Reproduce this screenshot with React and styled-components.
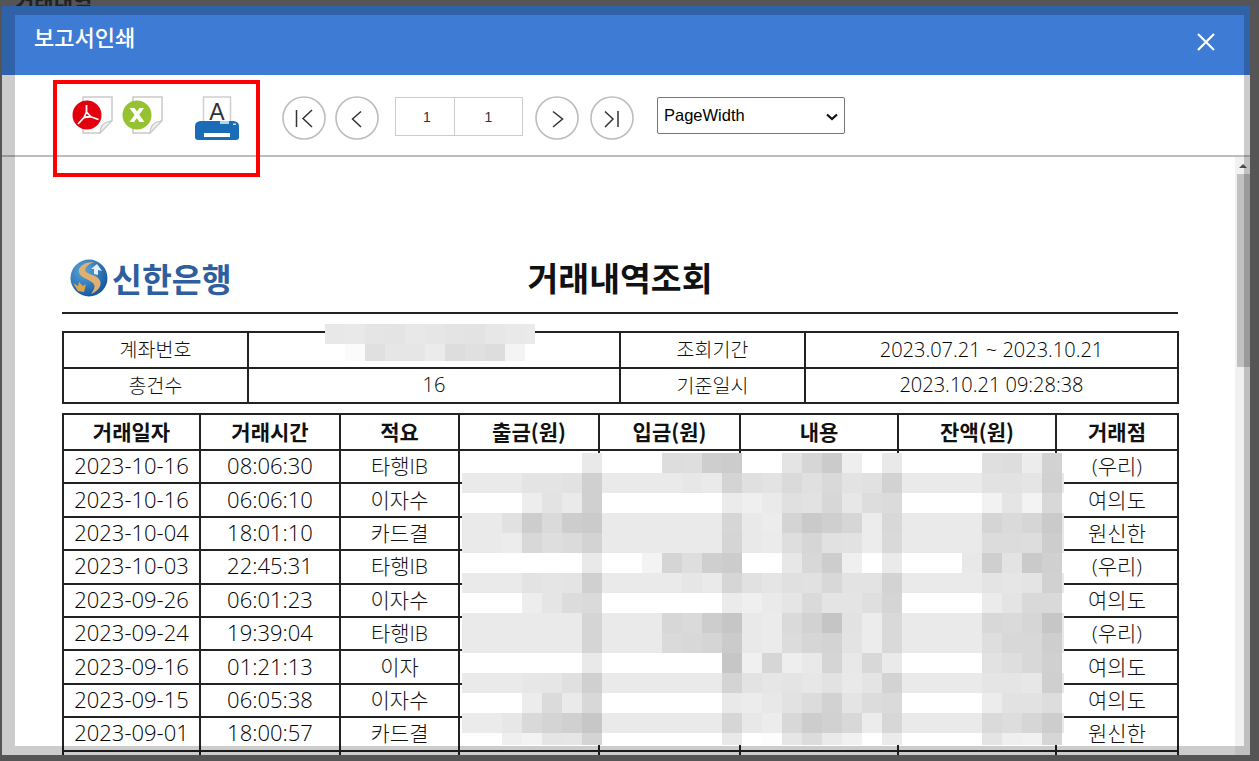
import React from "react";
import styled, { createGlobalStyle } from "styled-components";

const GlobalStyle = createGlobalStyle`
    html, body {
        margin: 0;
        height: 100%;
        overflow: hidden;
        background: #555;
    }
    * {
        box-sizing: border-box;
    }
`;

const KR = `"Open Sans", "Noto Sans CJK KR", sans-serif`;

const selectArrow = encodeURIComponent(
    `<svg xmlns="http://www.w3.org/2000/svg" width="12" height="8"><path d="M1 1.500L6 6L11 1.500" fill="none" stroke="#111" stroke-width="2.200"/></svg>`
);

const Backdrop = styled.div`
    position: relative;
    height: 100vh;
    padding: 6px 9px 6px 2px;
    background: #555;
    font-family: ${KR};
`;

const BehindTitle = styled.div`
    position: absolute;
    left: 15px;
    top: -13px;
    font-size: 21px;
    line-height: 28px;
    font-weight: 700;
    color: #222;
`;

const Modal = styled.div`
    position: relative;
    display: flex;
    flex-direction: column;
    height: 100%;
    background: #fff;
    overflow: hidden;
`;

/* translucent bootstrap-ish modal border, it sits on top of everything */
const ModalFrame = styled.div`
    position: absolute;
    inset: 0;
    border-style: solid;
    border-color: rgba(0, 0, 0, 0.2);
    border-width: 9px 6px 9px 13px;
    pointer-events: none;
`;

const Marker = styled.div`
    position: absolute;
    left: 51px;
    top: 74px;
    width: 207px;
    height: 97px;
    border: 4px solid #f00;
    pointer-events: none;
`;

const Header = styled.div`
    display: flex;
    justify-content: space-between;
    align-items: flex-start;
    flex: none;
    height: 69px;
    padding: 15px 35px 0 32px;
    background: #3d7bd4;
`;

const ModalTitle = styled.div`
    font-family: "Noto Sans CJK KR", sans-serif;
    font-size: 22px;
    line-height: 30px;
    font-weight: 500;
    color: #fff;
`;

const CloseIcon = styled.svg`
    display: block;
    width: 18px;
    height: 18px;
    margin-top: 12px;
`;

const Toolbar = styled.div`
    display: flex;
    align-items: flex-start;
    flex: none;
    height: 82px;
    padding: 21px 0 0 69px;
    border-bottom: 2px solid #bdbdbd;
    background: #fff;
`;

const ExportIcon = styled.svg`
    display: block;
    flex: none;
    margin-left: ${(p) => p.$gap || 0}px;
`;

const NavGroup = styled.div`
    display: flex;
    gap: ${(p) => p.$gap}px;
    margin-left: ${(p) => p.$left}px;
`;

const NavButton = styled.button`
    display: block;
    width: 44px;
    height: 44px;
    padding: 0;
    border: 0;
    background: none;
`;

const NavGlyph = styled.svg`
    display: block;
`;

const PageBox = styled.div`
    display: flex;
    width: 128px;
    height: 39px;
    margin: 1px 0 0 16px;
    border: 1px solid #ccc;
`;

const PageInput = styled.input`
    width: ${(p) => p.$w}px;
    height: 100%;
    padding: 0 0 0 ${(p) => p.$inset || 0}px;
    border: 0;
    border-right: ${(p) => (p.$divided ? "1px solid #ccc" : "0")};
    outline: 0;
    background: none;
    font-family: "Liberation Sans", sans-serif;
    font-size: 14px;
    color: #333;
    text-align: center;
`;

const ZoomSelect = styled.select`
    width: 188px;
    height: 37px;
    margin: 1px 0 0 23px;
    padding: 0 0 2px 6px;
    border: 1px solid #767676;
    border-radius: 2px;
    appearance: none;
    background: #fff url("data:image/svg+xml,${selectArrow}") no-repeat right 6px top 15px;
    font-family: "Liberation Sans", sans-serif;
    font-size: 16.5px;
    color: #000;
`;

const Pane = styled.div`
    position: relative;
    flex: 1;
    min-height: 0;
    overflow: hidden;
`;

const ScrollTrack = styled.div`
    position: absolute;
    top: 0;
    right: 0;
    bottom: 0;
    width: 15px;
    padding-left: 2px;
    background: #f1f1f1;
`;

const ScrollArrow = styled.div`
    width: 0;
    height: 0;
    margin: 7px 0 0 2px;
    border-left: 4px solid transparent;
    border-right: 4px solid transparent;
    border-bottom: 4px solid #505050;
`;

const ScrollThumb = styled.div`
    height: 193px;
    margin-top: 6px;
    background: #c1c1c1;
`;

const Sheet = styled.div`
    width: 1116px;
    margin-left: 60px;
    padding-top: 98px;
`;

const TitleRow = styled.div`
    display: grid;
    grid-template-columns: 1fr auto 1fr;
    align-items: flex-start;
    height: 60px;
    margin-top: -1px;
    border-bottom: 2px solid #222;
`;

const Logo = styled.div`
    display: flex;
    align-items: center;
    gap: 4px;
    padding: 1px 0 0 8px;
    font-family: "Noto Sans CJK KR", sans-serif;
    font-size: 32.500px;
    line-height: 46px;
    font-weight: 700;
    color: #2f5e9e;
`;

const LogoMark = styled.svg`
    display: block;
    flex: none;
`;

const ReportTitle = styled.h1`
    margin: 0;
    font-family: "Noto Sans CJK KR", sans-serif;
    font-size: 33.5px;
    line-height: 46px;
    font-weight: 700;
    color: #111;
`;

const TableWrap = styled.div`
    position: relative;
    margin-top: ${(p) => p.$top}px;
`;

const Grid = styled.table`
    width: 1115px;
    table-layout: fixed;
    border-collapse: collapse;
    color: #111;
    font-size: ${(p) => p.$size}px;
    font-weight: 300;

    th,
    td {
        padding: 0;
        border: 2px solid #222;
        text-align: center;
        white-space: nowrap;
        overflow: hidden;
        line-height: 1;
    }

    th {
        padding-bottom: 2px;
        font-weight: 700;
        color: #111;
        font-family: "Noto Sans CJK KR", sans-serif;
    }
`;

const NumCell = styled.td`
    && {
        padding-bottom: ${(p) => p.$lift || 0}px;
    }
    font-size: ${(p) => p.$size}px;
    color: #000;
`;

const InfoRow = styled.tr`
    height: 35.5px;
`;

const HeadRow = styled.tr`
    height: 36px;
`;

const DataRow = styled.tr`
    height: 33.4px;
`;

const Mosaic = styled.div`
    position: absolute;
    left: ${(p) => p.$left}px;
    top: ${(p) => p.$top}px;
    display: grid;
    grid-template-columns: ${(p) => p.$cols};
    grid-template-rows: ${(p) => p.$rows};
    height: ${(p) => p.$height}px;
    overflow: hidden;
`;

const MosaicCell = styled.div``;

const accountShades = [
    "e8 e9 e5 e4 e8 e6 e4 e3 e7 e9 ea",
    "-- fb e0 e6 e6 eb dd e0 dd f4 --",
];

const bodyShades = [
    "ff ff ff ff ff ff e9 ff ff ff dd de ce cc ff ff e4 d6 cb ee ff e9 ff ff ff ff df dd ec d2 --",
    "ea ea ea e4 e4 e2 d0 ea ea ea ea e7 ea d4 e0 e3 da e0 d9 e3 e1 d2 ea ea ea ea e2 e2 e5 d1 e8",
    "ff ff ff ed e3 ea d0 ff ff ff ff ff ff eb ef ea e0 e2 d7 e7 dd db ff ff ff ff f2 e5 f3 d8 --",
    "ea ea e1 cd da cd cb ea ea ea ea ea ea d6 e9 ec d4 ca cf d6 ec d8 ea ea ea ea d5 da d6 ca e8",
    "ea ea ec d8 de db d3 ea ea ea ea ea ea d5 e9 eb de d6 e1 e2 ec d9 ea ea ea ea dc dc dd cd e8",
    "ff ff ff ff ff ff e9 ff ff f3 d5 de cf cc ff ff e7 d8 cd ef ff ea ff ff ff e8 cf e3 ca d0 --",
    "ea ea ea e3 e5 e4 d0 ea ea ea ea e6 ea d6 e1 e5 e0 e1 d8 e3 e3 d3 ea ea ea ea e4 e6 e4 d1 e8",
    "ff ff ff ed e5 dc da ff ff ff ff ff ff eb ef ea e5 da e4 e4 df d5 ff ff ff ff eb e4 d9 d9 --",
    "ea ea ea ea ea ea d5 ea ea ea d7 da cd c6 e9 eb da d2 c5 e2 ec d9 ea ea ea ea d8 da d6 c6 e8",
    "ea ea ea ea ea ea d5 ea ea ea da d8 d5 cb e9 eb dc d6 d3 e3 ec d9 ea ea ea ea de d8 d8 ce e8",
    "ff ff ff ff ff ff e9 ff ff ff ff ff ff c6 f0 d6 ee e9 d5 e8 d8 ea ff ff ff ff e2 de d8 d0 --",
    "ea ea ea e7 e6 e0 d0 ea ea ea ea ea ea d4 e3 e6 e4 e7 e2 e9 e4 d3 ea ea ea ea e5 e5 e7 cf e8",
    "ff ff ff ec db ea d8 ff ff ff ff ff ff e9 ec e8 e2 dc d2 e4 dc da ff ff ff ff ec e2 e2 dd --",
    "eb eb e7 d9 d4 d0 c7 ea ea ea ea ea ea d6 e8 ec d8 cd d1 d8 ec d7 ea ea ea ea da dd d6 cd e8",
    "ff ff ef f3 e5 e6 d4 ff ff ff ff ff ff e9 ff fd e6 dc ea f1 ff eb ff ff ff ff e4 ef f1 d6 --",
];

const transactions = [
    ["2023-10-16", "08:06:30", "타행IB", "(우리)"],
    ["2023-10-16", "06:06:10", "이자수", "여의도"],
    ["2023-10-04", "18:01:10", "카드결", "원신한"],
    ["2023-10-03", "22:45:31", "타행IB", "(우리)"],
    ["2023-09-26", "06:01:23", "이자수", "여의도"],
    ["2023-09-24", "19:39:04", "타행IB", "(우리)"],
    ["2023-09-16", "01:21:13", "이자", "여의도"],
    ["2023-09-15", "06:05:38", "이자수", "여의도"],
    ["2023-09-01", "18:00:57", "카드결", "원신한"],
    ["", "", "", ""],
];

const infoCols = [185, 372, 185, 373];
const bodyCols = [137, 140, 119, 140, 141, 158, 158, 122];
const headings = ["거래일자", "거래시간", "적요", "출금(원)", "입금(원)", "내용", "잔액(원)", "거래점"];

const shadeCells = (rows) =>
    rows.flatMap((row, r) =>
        row.split(" ").map((s, c) => (
            <MosaicCell key={`${r}-${c}`} style={{ background: s === "--" ? "transparent" : `#${s}${s}${s}` }} />
        ))
    );

const PageCorner = () => (
    <>
        <path d="M12 1H41V24L29 37H12Z" fill="#fff" stroke="#c9c9c9" strokeWidth="1.5" />
        <path d="M29 37C29.500 30 32 26 41 25L29 37Z" fill="#eee" stroke="#c9c9c9" strokeWidth="1.2" />
    </>
);

const PdfIcon = () => (
    <ExportIcon width="42" height="38" viewBox="0 0 42 38">
        <PageCorner />
        <circle cx="16" cy="19" r="14.500" fill="#e2000f" />
        <path
            d="M15.500 9V16M13.500 21L7 28M19 20.500L27.500 23.500M15.500 16L13 21.500L19.500 20.500Z"
            fill="none"
            stroke="#fff"
            strokeWidth="1.800"
            strokeLinejoin="round"
        />
    </ExportIcon>
);

const ExcelIcon = () => (
    <ExportIcon width="42" height="38" viewBox="0 0 42 38" $gap={8}>
        <PageCorner />
        <circle cx="16" cy="19" r="14.500" fill="#95c231" />
        <path d="M8.500 12H13.500L23.500 26H18.500Z M18.500 12H23L13 26H8.500Z" fill="#fff" />
    </ExportIcon>
);

const PrintIcon = () => (
    <ExportIcon width="45" height="45" viewBox="0 0 45 45" $gap={32}>
        <rect x="8.500" y="1" width="27" height="28" fill="#fff" stroke="#cfcfcf" strokeWidth="1.500" />
        <text x="22" y="24" textAnchor="middle" fontFamily="Liberation Sans" fontSize="23" fill="#333">
            A
        </text>
        <path d="M5 25H39Q44 26 44 30V41Q44 44 41 44H3Q0 44 0 41V30Q0 26 5 25Z" fill="#1b6cb7" />
        <rect x="25" y="25" width="9" height="3" fill="#bcd2e6" />
        <rect x="9" y="37" width="26" height="4" fill="#fff" />
        <rect x="38" y="27.500" width="3" height="1.500" fill="#cfe0f0" />
    </ExportIcon>
);

const NavIcon = ({ d }) => (
    <NavButton>
        <NavGlyph width="44" height="44" viewBox="0 0 44 44">
            <circle cx="22" cy="22" r="21" fill="#fff" stroke="#bdbdbd" strokeWidth="1.600" />
            <path d={d} fill="none" stroke="#333" strokeWidth="1.500" />
        </NavGlyph>
    </NavButton>
);

const ShinhanMark = () => (
    <LogoMark width="38" height="38" viewBox="0 0 38 38">
        <defs>
            <radialGradient id="orb" cx="35%" cy="30%" r="75%">
                <stop offset="0%" stopColor="#5ba8dc" />
                <stop offset="100%" stopColor="#14559c" />
            </radialGradient>
        </defs>
        <circle cx="19" cy="19" r="18.500" fill="url(#orb)" />
        <path
            d="M24 3C14 3 8 8 9 13C10 19 19 20 23 24C26 27 24 31 21 35C29 32 33 25 29 20C25 15 15 15 15 11C15 8 19 5 24 3Z"
            fill="#dfb070"
        />
        <path d="M21 10L27 5L32 12L28 11V16L24 15V10Z" fill="#e6f0f8" />
        <path d="M3 24L8 27L9 23L13 27L16 25L14 33L8 32Z" fill="#dca64f" />
    </LogoMark>
);

const App = () => (
    <Backdrop>
        <GlobalStyle />
        <BehindTitle>거래내역</BehindTitle>
        <Modal>
            <Header>
                <ModalTitle>보고서인쇄</ModalTitle>
                <CloseIcon viewBox="0 0 18 18">
                    <path d="M1 1L17 17M17 1L1 17" stroke="#fff" strokeWidth="2.200" />
                </CloseIcon>
            </Header>
            <Toolbar>
                <PdfIcon />
                <ExcelIcon />
                <PrintIcon />
                <NavGroup $gap={9} $left={42}>
                    <NavIcon d="M14.500 14V31M30 14L21 22.500L30 31" />
                    <NavIcon d="M26 15.500L17.500 23L26 31" />
                </NavGroup>
                <PageBox>
                    <PageInput $w={59} $inset={4} $divided readOnly value="1" />
                    <PageInput $w={67} readOnly value="1" />
                </PageBox>
                <NavGroup $gap={11} $left={12}>
                    <NavIcon d="M18 15.500L27.500 23L18 31" />
                    <NavIcon d="M15 15.500L23 23L15 31M28 15V31" />
                </NavGroup>
                <ZoomSelect defaultValue="PageWidth">
                    <option>PageWidth</option>
                    <option>PageHeight</option>
                    <option>100%</option>
                </ZoomSelect>
            </Toolbar>
            <Pane>
                <Sheet>
                    <TitleRow>
                        <Logo>
                            <ShinhanMark />
                            신한은행
                        </Logo>
                        <ReportTitle>거래내역조회</ReportTitle>
                    </TitleRow>
                    <TableWrap $top={17}>
                        <Grid $size={19.500}>
                            <colgroup>
                                {infoCols.map((w, i) => (
                                    <col key={i} width={w} />
                                ))}
                            </colgroup>
                            <tbody>
                                <InfoRow>
                                    <td>계좌번호</td>
                                    <td></td>
                                    <td>조회기간</td>
                                    <NumCell $size={20}>2023.07.21 ~ 2023.10.21</NumCell>
                                </InfoRow>
                                <InfoRow>
                                    <td>총건수</td>
                                    <NumCell $size={20}>16</NumCell>
                                    <td>기준일시</td>
                                    <NumCell $size={20}>2023.10.21 09:28:38</NumCell>
                                </InfoRow>
                            </tbody>
                        </Grid>
                        <Mosaic $left={263} $top={-7} $cols="repeat(10, 20px) 10px" $rows="20px 17px" $height={37}>
                            {shadeCells(accountShades)}
                        </Mosaic>
                    </TableWrap>
                    <TableWrap $top={9}>
                        <Grid $size={21}>
                            <colgroup>
                                {bodyCols.map((w, i) => (
                                    <col key={i} width={w} />
                                ))}
                            </colgroup>
                            <thead>
                                <HeadRow>
                                    {headings.map((h) => (
                                        <th key={h}>{h}</th>
                                    ))}
                                </HeadRow>
                            </thead>
                            <tbody>
                                {transactions.map((t, i) => (
                                    <DataRow key={i}>
                                        <NumCell $size={22} $lift={3}>{t[0]}</NumCell>
                                        <NumCell $size={22} $lift={3}>{t[1]}</NumCell>
                                        <td>{t[2]}</td>
                                        <td></td>
                                        <td></td>
                                        <td></td>
                                        <td></td>
                                        <td>{t[3]}</td>
                                    </DataRow>
                                ))}
                            </tbody>
                        </Grid>
                        <Mosaic $left={400} $top={40} $cols="repeat(30, 20px) 2px" $rows="repeat(15, 20px)" $height={292}>
                            {shadeCells(bodyShades)}
                        </Mosaic>
                    </TableWrap>
                </Sheet>
                <ScrollTrack>
                    <ScrollArrow />
                    <ScrollThumb />
                </ScrollTrack>
            </Pane>
            <ModalFrame />
            <Marker />
        </Modal>
    </Backdrop>
);

export default App;
